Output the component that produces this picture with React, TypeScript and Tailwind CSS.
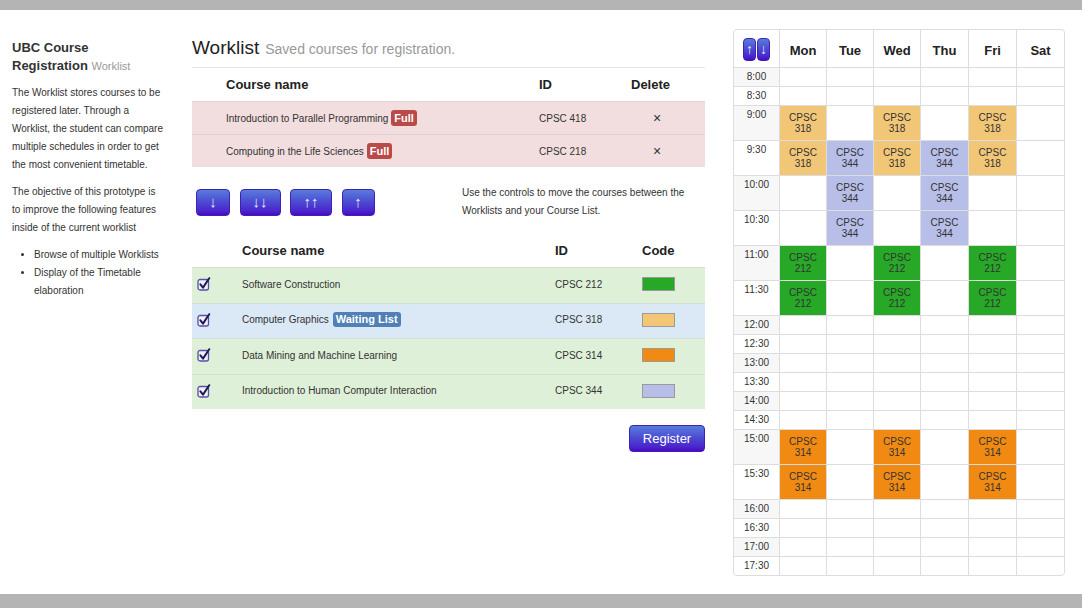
import React from "react";

const days = ["Mon", "Tue", "Wed", "Thu", "Fri", "Sat"];

const slots = [
  "8:00", "8:30", "9:00", "9:30", "10:00", "10:30", "11:00", "11:30", "12:00", "12:30",
  "13:00", "13:30", "14:00", "14:30", "15:00", "15:30", "16:00", "16:30", "17:00", "17:30",
];

const tall = ["9:00", "9:30", "10:00", "10:30", "11:00", "11:30", "15:00", "15:30"];

const colors: Record<string, string> = {
  "318": "bg-[#f2c677]",
  "344": "bg-[#b7bee8]",
  "212": "bg-[#27a827]",
  "314": "bg-[#f08a12]",
};

// slot -> day -> course number
const schedule: Record<string, Record<string, string>> = {
  "9:00": { Mon: "318", Wed: "318", Fri: "318" },
  "9:30": { Mon: "318", Tue: "344", Wed: "318", Thu: "344", Fri: "318" },
  "10:00": { Tue: "344", Thu: "344" },
  "10:30": { Tue: "344", Thu: "344" },
  "11:00": { Mon: "212", Wed: "212", Fri: "212" },
  "11:30": { Mon: "212", Wed: "212", Fri: "212" },
  "15:00": { Mon: "314", Wed: "314", Fri: "314" },
  "15:30": { Mon: "314", Wed: "314", Fri: "314" },
};

const purpleBtn =
  "flex items-center justify-center rounded-[4px] border border-[#3d22b4] bg-linear-to-b from-[#5a7bdb] via-[#4c46d2] to-[#4a02c8] text-[#e6ebff]";

function CheckBox() {
  return (
    <svg width="14" height="14" viewBox="0 0 14 14">
      <rect x="1" y="2.5" width="10.5" height="10.5" rx="2" fill="#f1f0fb" stroke="#5a4ea6" strokeWidth="1.3" />
      <path d="M3.4 7.4 L6 10.6 L12.2 1.2" fill="none" stroke="#1d1b52" strokeWidth="2" strokeLinecap="round" strokeLinejoin="round" />
    </svg>
  );
}

function Sidebar() {
  return (
    <div className="w-[192px] shrink-0 whitespace-nowrap pl-[12px] pt-[29px]">
      <h1 className="text-[13px] font-bold leading-[18px]">
        UBC Course
        <br />
        Registration <small className="text-[11px] font-normal text-[#999]">Worklist</small>
      </h1>
      <p className="mt-[9px] text-[10px] leading-[18px]">
        The Worklist stores courses to be
        <br />
        registered later. Through a
        <br />
        Worklist, the student can compare
        <br />
        multiple schedules in order to get
        <br />
        the most convenient timetable.
      </p>
      <p className="mt-[9px] text-[10px] leading-[18px]">
        The objective of this prototype is
        <br />
        to improve the following features
        <br />
        inside of the current worklist
      </p>
      <ul className="mt-[9px] list-disc pl-[22px] text-[10px] leading-[18px]">
        <li>Browse of multiple Worklists</li>
        <li>
          Display of the Timetable
          <br />
          elaboration
        </li>
      </ul>
    </div>
  );
}

function Main() {
  const saved = [
    { name: "Introduction to Parallel Programming", id: "CPSC 418" },
    { name: "Computing in the Life Sciences", id: "CPSC 218" },
  ];
  const courses = [
    { name: "Software Construction", id: "CPSC 212", bg: "bg-[#dff0d8]", swatch: "bg-[#27a827]" },
    { name: "Computer Graphics", id: "CPSC 318", bg: "bg-[#dbe8f5]", swatch: "bg-[#f2c677]", waiting: true },
    { name: "Data Mining and Machine Learning", id: "CPSC 314", bg: "bg-[#dff0d8]", swatch: "bg-[#f08a12]" },
    { name: "Introduction to Human Computer Interaction", id: "CPSC 344", bg: "bg-[#dff0d8]", swatch: "bg-[#b7bee8]" },
  ];

  return (
    <div className="w-[513px] shrink-0 pt-[28px]">
      <div className="flex h-[20px] items-baseline leading-[20px]">
        <span className="text-[19px] text-[#222]">Worklist</span>
        <span className="ml-[6px] text-[14px] text-[#999]">Saved courses for registration.</span>
      </div>
      <div className="mt-[9px] border-t border-[#e5e5e5]" />

      <div className="grid h-[33px] grid-cols-[34px_313px_92px_1fr] items-center text-[13px] font-bold text-[#222]">
        <div />
        <div>Course name</div>
        <div>ID</div>
        <div>Delete</div>
      </div>
      {saved.map((c) => (
        <div
          key={c.id}
          className="grid h-[33px] grid-cols-[34px_313px_92px_1fr] items-center border-t border-[#e2d2d2] bg-[#f2dede] text-[10px]"
        >
          <div />
          <div className="flex items-center gap-[3px]">
            {c.name}
            <span className="rounded-[3px] bg-[#b94a48] px-[3px] text-[11px] font-bold leading-[16px] text-white">Full</span>
          </div>
          <div>{c.id}</div>
          <div className="pl-[22px] text-[14px]">×</div>
        </div>
      ))}

      <div className="mt-[17px] flex">
        <div className="flex gap-[9.5px] pl-[4px] pt-[4.5px] text-[15px]">
          <button className={`${purpleBtn} h-[27px] w-[34px]`}>↓</button>
          <button className={`${purpleBtn} h-[27px] w-[41px]`}>↓↓</button>
          <button className={`${purpleBtn} h-[27px] w-[42px]`}>↑↑</button>
          <button className={`${purpleBtn} h-[27px] w-[33px]`}>↑</button>
        </div>
        <p className="ml-auto w-[243px] whitespace-nowrap text-[10px] leading-[18px]">
          Use the controls to move the courses between the
          <br />
          Worklists and your Course List.
        </p>
      </div>

      <div className="mt-[14px] grid h-[33px] grid-cols-[50px_313px_87px_1fr] items-center text-[13px] font-bold text-[#222]">
        <div />
        <div>Course name</div>
        <div>ID</div>
        <div>Code</div>
      </div>
      {courses.map((c) => (
        <div
          key={c.id}
          className={`grid h-[35.5px] grid-cols-[50px_313px_87px_1fr] items-center border-t border-[#d6ddd6] pb-[2px] text-[10px] ${c.bg}`}
        >
          <div className="pl-[5px]">
            <CheckBox />
          </div>
          <div className="flex items-center gap-[4px]">
            {c.name}
            {c.waiting && (
              <span className="rounded-[3px] bg-[#5180b6] px-[3px] text-[11px] font-bold leading-[15px] text-white">
                Waiting List
              </span>
            )}
          </div>
          <div>{c.id}</div>
          <div>
            <div className={`h-[14px] w-[33px] border border-[#9a9a9a] ${c.swatch}`} />
          </div>
        </div>
      ))}

      <div className="mt-[16px] flex justify-end">
        <button className={`${purpleBtn} h-[27px] w-[76px] text-[13px] text-white`}>Register</button>
      </div>
    </div>
  );
}

function Timetable() {
  return (
    <div className="ml-[28px] shrink-0 pt-[19px]">
      <div className="grid grid-cols-[45px_46px_46px_46px_47px_47px_47px] gap-px overflow-hidden rounded-[4px] border border-[#ddd] bg-[#ddd]">
        <div className="flex h-[37px] items-center justify-center bg-white pt-[1px]">
          <div className="flex gap-px">
            <span className={`${purpleBtn} h-[23px] w-[13px] rounded-[3px] text-[14px]`}>↑</span>
            <span className={`${purpleBtn} h-[23px] w-[13px] rounded-[3px] text-[14px]`}>↓</span>
          </div>
        </div>
        {days.map((d) => (
          <div key={d} className="flex h-[37px] items-center justify-center bg-white pt-[5px] text-[13px] font-bold text-[#222]">
            {d}
          </div>
        ))}
        {slots.map((s, i) => {
          const h = tall.includes(s) ? "h-[34px]" : "h-[18px]";
          const row = schedule[s] || {};
          return (
            <React.Fragment key={s}>
              <div className={`${h} pt-[3px] text-center text-[10px] leading-[12px] ${i % 2 === 0 ? "bg-[#f7f7f7]" : "bg-white"}`}>
                {s}
              </div>
              {days.map((d) => {
                const course = row[d];
                return course ? (
                  <div
                    key={d}
                    className={`${h} flex flex-col items-center justify-center text-[10px] leading-[11px] text-[#333] ${colors[course]}`}
                  >
                    <span>CPSC</span>
                    <span>{course}</span>
                  </div>
                ) : (
                  <div key={d} className={`${h} bg-white`} />
                );
              })}
            </React.Fragment>
          );
        })}
      </div>
    </div>
  );
}

export default function App() {
  return (
    <div className="flex h-[608px] w-[1082px] flex-col overflow-hidden bg-white font-['Liberation_Sans',Arial,sans-serif] text-[#333]">
      <div className="h-[10px] shrink-0 bg-[#b4b4b4]" />
      <div className="flex flex-1">
        <Sidebar />
        <Main />
        <Timetable />
      </div>
      <div className="h-[14px] shrink-0 bg-[#b4b4b4]" />
    </div>
  );
}
